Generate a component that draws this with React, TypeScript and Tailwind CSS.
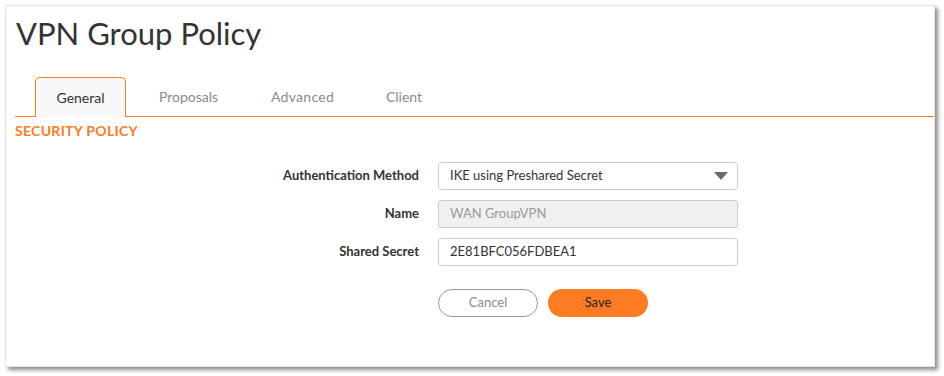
import React from "react";

export default function App() {
  return (
    <div className="w-[944px] h-[376px] bg-white pt-[5px] pl-[5px]" style={{ fontFamily: "Lato, 'Open Sans', sans-serif" }}>
      <div className="w-[930px] h-[362px] bg-white border border-[#e4e4e4] shadow-[3px_3px_4px_rgba(0,0,0,0.45)] flex flex-col">
        <h1 className="pl-[10px] pt-[9px] text-[31px] leading-[36px] text-[#333333]">VPN Group Policy</h1>
        <div className="mt-[26px] ml-[9px] flex items-end border-b border-[#fd7b23] h-[40px]">
          <div className="ml-[20px] w-[91px] h-[40px] -mb-px bg-[#f8f8f8] border border-b-0 border-[#fd7b23] rounded-t-[5px] flex items-center justify-center text-[14px] text-[#333]">General</div>
          <div className="w-[125px] h-[40px] flex items-center justify-center text-[14px] text-[#8a8a8a]">Proposals</div>
          <div className="w-[103px] h-[40px] flex items-center justify-center text-[14px] tracking-[0.3px] text-[#8a8a8a]">Advanced</div>
          <div className="w-[100px] h-[40px] flex items-center justify-center text-[14px] text-[#8a8a8a]">Client</div>
        </div>
        <div className="pl-[9px] pt-[6px] text-[14px] tracking-[0.3px] font-bold text-[#fd7b23] leading-[16px]">SECURITY POLICY</div>
        <div className="mt-[23px] grid grid-cols-[413px_300px] gap-x-[19px] gap-y-[10px] items-center">
          <div className="text-right text-[13px] font-bold text-[#333]">Authentication Method</div>
          <div className="h-[28px] border border-[#cccccc] rounded-[3px] bg-white flex items-center justify-between pl-[11px] pr-[9px] text-[13px] text-[#333]">
            <span>IKE using Preshared Secret</span>
            <svg width="14" height="8" viewBox="0 0 14 8"><path d="M0 0H14L7 8Z" fill="#6b6b6b" /></svg>
          </div>
          <div className="text-right text-[13px] font-bold text-[#333]">Name</div>
          <div className="h-[28px] border border-[#cccccc] rounded-[3px] bg-[#f0f0f0] flex items-center pl-[11px] text-[13px] text-[#9a9a9a]">WAN GroupVPN</div>
          <div className="text-right text-[13px] font-bold text-[#333]">Shared Secret</div>
          <div className="h-[28px] border border-[#cccccc] rounded-[3px] bg-white flex items-center pl-[11px] text-[13px] text-[#333]">2E81BFC056FDBEA1</div>
          <div className="mt-[13px]" />
          <div className="mt-[13px] flex gap-[10px]">
            <button className="w-[100px] h-[28px] rounded-full border border-[#999] bg-white text-[13px] text-[#8a8a8a]">Cancel</button>
            <button className="w-[100px] h-[28px] rounded-full bg-[#fd7b23] text-[13px] text-[#222]">Save</button>
          </div>
        </div>
      </div>
    </div>
  );
}
